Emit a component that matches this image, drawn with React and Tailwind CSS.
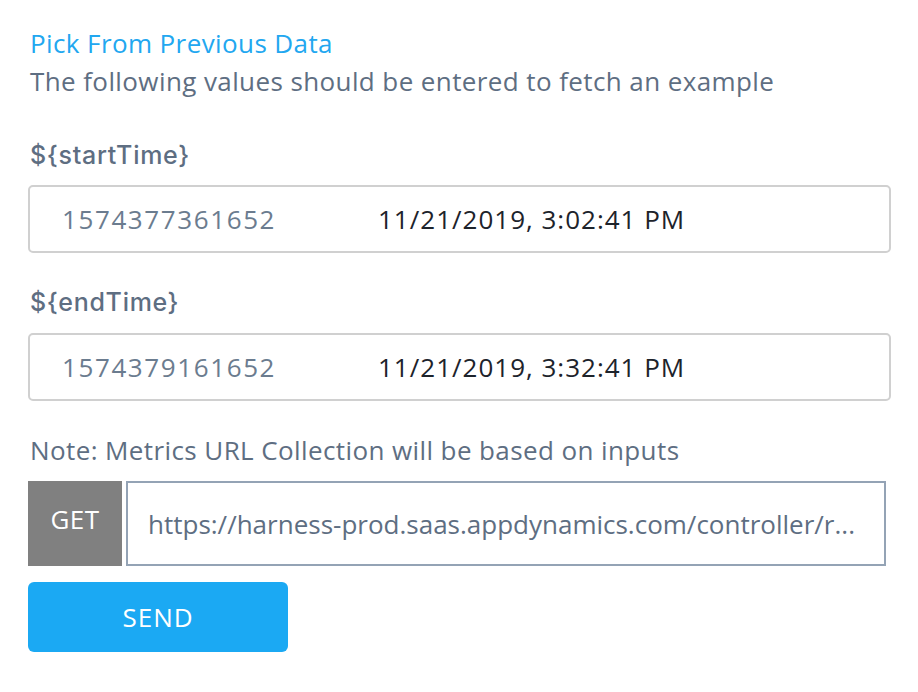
export default function App() {
  return (
    <div className="min-h-[692px] w-[918px] bg-white px-[28px] pt-[26px] font-['Open_Sans','Noto_Sans',sans-serif] tracking-[0.4px]">
      <div className="pl-[2px] text-[26px] leading-[34px] text-[#22a7f0]">Pick From Previous Data</div>
      <div className="mt-[4px] pl-[2px] text-[26px] leading-[34px] text-[#5e6e82]">
        The following values should be entered to fetch an example
      </div>

      <div className="mt-[40px] pl-[2px] font-['Inter','Open_Sans',sans-serif] text-[25px] font-medium leading-[34px] tracking-[0.7px] text-[#5e6e82]">{'${startTime}'}</div>
      <div className="mt-[13px] flex h-[68px] w-[863px] items-center rounded-[5px] border-2 border-[#d0d0d0] pl-[32px] text-[26px]">
        <span className="w-[316px] tracking-[1.6px] text-[#6b7c8f]">1574377361652</span>
        <span className="tracking-[1px] text-[#1d232b]">11/21/2019, 3:02:41 PM</span>
      </div>

      <div className="mt-[32px] pl-[2px] font-['Inter','Open_Sans',sans-serif] text-[25px] font-medium leading-[34px] tracking-[0.7px] text-[#5e6e82]">{'${endTime}'}</div>
      <div className="mt-[14px] flex h-[68px] w-[863px] items-center rounded-[5px] border-2 border-[#d0d0d0] pl-[32px] text-[26px]">
        <span className="w-[316px] tracking-[1.6px] text-[#6b7c8f]">1574379161652</span>
        <span className="tracking-[1px] text-[#1d232b]">11/21/2019, 3:32:41 PM</span>
      </div>

      <div className="mt-[32px] pl-[2px] text-[26px] leading-[34px] text-[#5e6e82]">
        Note: Metrics URL Collection will be based on inputs
      </div>

      <div className="mt-[14px] flex h-[85px] w-[858px] gap-[4px]">
        <div className="flex w-[94px] items-center justify-center bg-[#808080] pb-[8px] text-[26px] text-white">GET</div>
        <div className="flex min-w-0 flex-1 items-center border-2 border-[#94a3b5] pl-[20px] pt-[1px] text-[26px] tracking-normal text-[#5e6e82]">
          <span className="whitespace-nowrap">https://harness-prod.saas.appdynamics.com/controller/r...</span>
        </div>
      </div>

      <button
        type="button"
        className="mt-[16px] flex h-[70px] w-[260px] items-center justify-center rounded-[6px] bg-[#1ba9f3] text-[26px] tracking-[1px] text-white"
      >
        SEND
      </button>
    </div>
  )
}
